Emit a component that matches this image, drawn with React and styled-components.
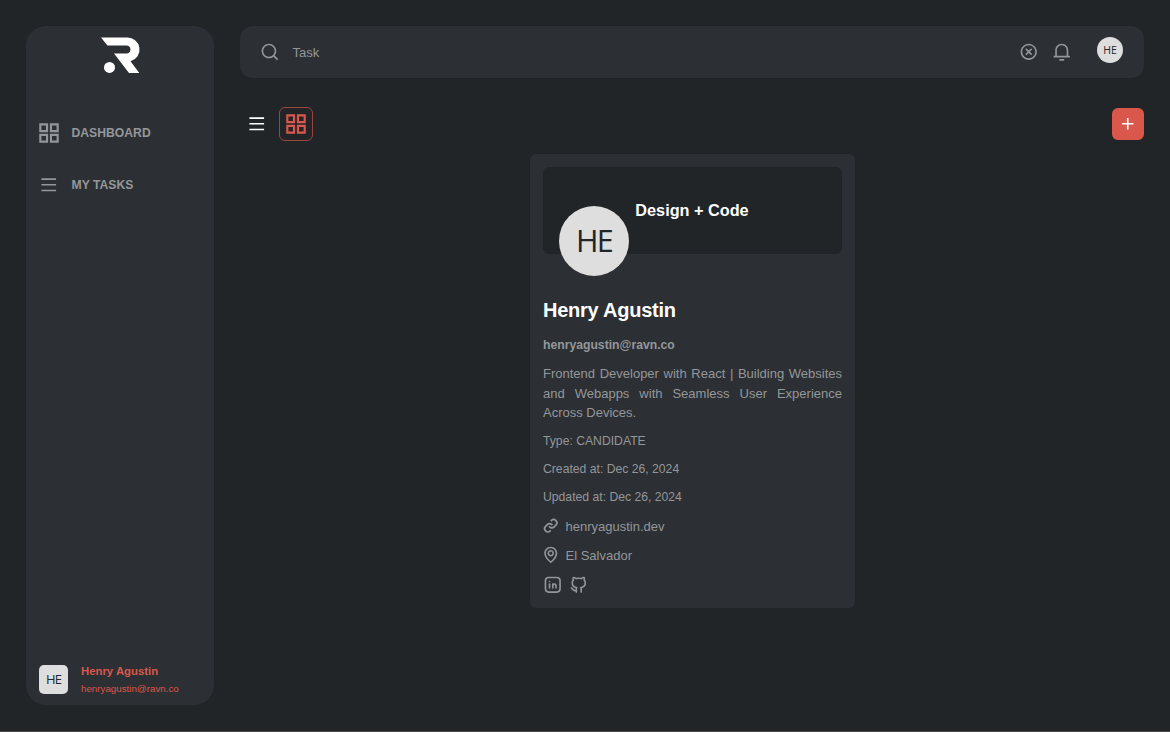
import React from 'react';
import styled, { createGlobalStyle } from 'styled-components';
import { RiMenuLine, RiSearchLine, RiCloseCircleLine, RiNotification3Line, RiAddFill } from 'react-icons/ri';
import { TbBrandLinkedin, TbBrandGithub } from 'react-icons/tb';
import { BiLink, BiMap } from 'react-icons/bi';

const GlobalStyle = createGlobalStyle`
  * { box-sizing: border-box; margin: 0; padding: 0; }
  body { background: #222528; font-family: "Liberation Sans", Arial, sans-serif; color: #94979a; }
  svg { display: block; flex-shrink: 0; }
  button { border: none; background: none; cursor: pointer; }
`;

const Page = styled.div`
  display: flex;
  gap: 26px;
  height: 732px;
  padding: 26px;
  border-bottom: 1px solid #4a4a4c;
  overflow: hidden;
`;

const Sidebar = styled.aside`
  display: flex;
  flex-direction: column;
  width: 188px;
  height: 679px;
  padding: 11px 0 8px;
  background: #2c2f33;
  border-radius: 20px;
`;

const Logo = styled.svg`
  width: 40px;
  height: 37px;
  margin-left: 75px;
`;

const Nav = styled.nav`
  display: flex;
  flex-direction: column;
  margin-top: 33px;
`;

const NavItem = styled.a`
  display: flex;
  align-items: center;
  height: 52px;
  padding-left: 10px;
  font-size: 12.2px;
  font-weight: 700;
`;

const NavIcon = styled.span`
  display: flex;
  justify-content: center;
  width: 26px;
  margin-right: 9.5px;
`;

const Account = styled.div`
  display: flex;
  align-items: center;
  gap: 13px;
  margin-top: auto;
  padding-left: 13px;
  color: #da584b;
`;

const AccountAvatar = styled.div`
  margin-bottom: 2px;
`;

const AccountName = styled.p`
  font-size: 11.35px;
  line-height: 17px;
  font-weight: 700;
`;

const AccountMail = styled.p`
  font-size: 9.75px;
  line-height: 17px;
`;

const Avatar = styled.div`
  display: grid;
  place-items: center;
  flex-shrink: 0;
  width: ${(p) => p.$size}px;
  height: ${(p) => p.$size}px;
  padding-bottom: ${(p) => p.$lift || 0}px;
  border-radius: ${(p) => p.$radius};
  background: #dedede;
  color: #222528;
  font-family: "Open Sans", "Noto Sans", sans-serif;
  font-size: ${(p) => p.$font}px;
  letter-spacing: ${(p) => p.$tracking || 0}px;
  line-height: 1;
`;

const Main = styled.main`
  flex: 1;
  display: flex;
  flex-direction: column;
`;

const SearchBar = styled.header`
  display: flex;
  align-items: center;
  height: 52px;
  padding: 0 21px 0 20px;
  background: #2c2f33;
  border-radius: 13px;
`;

const SearchText = styled.span`
  flex: 1;
  margin-left: 13px;
  font-size: 13px;
`;

const HeaderActions = styled.div`
  display: flex;
  align-items: center;
  gap: 13.5px;
  margin-right: 25.5px;
`;

const HeaderAvatar = styled.div`
  margin-top: -4px;
`;

const Toolbar = styled.div`
  display: flex;
  align-items: center;
  height: 34px;
  margin-top: 29px;
`;

const ViewButton = styled.button`
  display: grid;
  place-items: center;
  width: 34px;
  height: 34px;
  border-radius: 6px;
  border: 1px solid ${(p) => (p.$active ? '#9b453e' : 'transparent')};
  color: ${(p) => (p.$active ? '#da584b' : '#ffffff')};
  margin-right: 5px;
`;

const AddButton = styled.button`
  display: grid;
  place-items: center;
  width: 32.5px;
  height: 32.5px;
  margin-left: auto;
  border-radius: 6px;
  background: #da584b;
  color: #ffffff;
`;

const Card = styled.article`
  display: flex;
  flex-direction: column;
  align-self: center;
  width: 325px;
  height: 453.5px;
  margin: 13px 0 0 1px;
  padding: 13px;
  background: #2c2f33;
  border-radius: 6px;
`;

const Banner = styled.div`
  display: flex;
  position: relative;
  justify-content: center;
  align-items: center;
  height: 87px;
  padding-right: 1px;
  border-radius: 6px;
  background: #222528;
`;

const BannerAvatar = styled.div`
  position: absolute;
  left: 16px;
  top: 39px;
`;

const BannerTitle = styled.h3`
  font-size: 16.25px;
  color: #ffffff;
`;

const Name = styled.h2`
  margin-top: 44px;
  font-size: 20px;
  line-height: 24px;
  letter-spacing: -0.25px;
  color: #ffffff;
`;

const Mail = styled.p`
  margin-top: 15px;
  font-size: 12.2px;
  line-height: 16px;
  font-weight: 700;
`;

const Bio = styled.p`
  margin: 11px 0 -1px;
  font-size: 13px;
  line-height: 19.5px;
  text-align: justify;
`;

const Meta = styled.p`
  font-size: 12.2px;
  line-height: 18px;
  margin-top: 10px;
`;

const Contacts = styled.div`
  margin: 1px 0 0 -2.3px;
`;

const Contact = styled.div`
  display: flex;
  align-items: center;
  gap: 5.3px;
  height: 19px;
  margin-top: 10px;
  font-size: 13px;
`;

const Socials = styled.div`
  display: flex;
  gap: 6.5px;
  margin-top: 10px;
`;

const GridIcon = () => (
  <svg width="26" height="26" viewBox="0 0 24 24" fill="none" stroke="currentColor" strokeWidth="2">
    <path d="M4 4h6.2v6.2H4zM13.8 4H20v6.2h-6.2zM4 13.8h6.2V20H4zM13.8 13.8H20V20h-6.2z" />
  </svg>
);

export default function App() {
  return (
    <>
      <GlobalStyle />
      <Page>
        <Sidebar>
          <Logo viewBox="0 0 40 37" fill="#fff">
            <path d="M0 0.5H26A12.1 12.1 0 0 1 29.5 24.3L38.3 36H28L13 16.6H26A4.1 4.1 0 0 0 26 8.5H6.4Z" />
            <circle cx="8.5" cy="30.4" r="5.5" />
          </Logo>
          <Nav>
            <NavItem>
              <NavIcon><GridIcon /></NavIcon>
              DASHBOARD
            </NavItem>
            <NavItem>
              <NavIcon><RiMenuLine size={19.5} /></NavIcon>
              MY TASKS
            </NavItem>
          </Nav>
          <Account>
            <AccountAvatar><Avatar $size={29} $radius="5px" $font={13} $tracking={-0.8}>HE</Avatar></AccountAvatar>
            <div>
              <AccountName>Henry Agustin</AccountName>
              <AccountMail>henryagustin@ravn.co</AccountMail>
            </div>
          </Account>
        </Sidebar>
        <Main>
          <SearchBar>
            <RiSearchLine size={19.5} />
            <SearchText>Task</SearchText>
            <HeaderActions>
              <RiCloseCircleLine size={19.5} />
              <RiNotification3Line size={19.5} />
            </HeaderActions>
            <HeaderAvatar><Avatar $size={26} $radius="50%" $font={10.5}>HE</Avatar></HeaderAvatar>
          </SearchBar>
          <Toolbar>
            <ViewButton><RiMenuLine size={19.5} /></ViewButton>
            <ViewButton $active><GridIcon /></ViewButton>
            <AddButton><RiAddFill size={19.5} /></AddButton>
          </Toolbar>
          <Card>
            <Banner>
              <BannerAvatar><Avatar $size={70} $radius="50%" $font={30.5} $tracking={-1.7} $lift={1}>HE</Avatar></BannerAvatar>
              <BannerTitle>Design + Code</BannerTitle>
            </Banner>
            <Name>Henry Agustin</Name>
            <Mail>henryagustin@ravn.co</Mail>
            <Bio>Frontend Developer with React | Building Websites and Webapps with Seamless User Experience Across Devices.</Bio>
            <Meta>Type: CANDIDATE</Meta>
            <Meta>Created at: Dec 26, 2024</Meta>
            <Meta>Updated at: Dec 26, 2024</Meta>
            <Contacts>
              <Contact><BiLink size={19.5} />henryagustin.dev</Contact>
              <Contact><BiMap size={19.5} />El Salvador</Contact>
            </Contacts>
            <Socials>
              <TbBrandLinkedin size={19.5} />
              <TbBrandGithub size={19.5} />
            </Socials>
          </Card>
        </Main>
      </Page>
    </>
  );
}
